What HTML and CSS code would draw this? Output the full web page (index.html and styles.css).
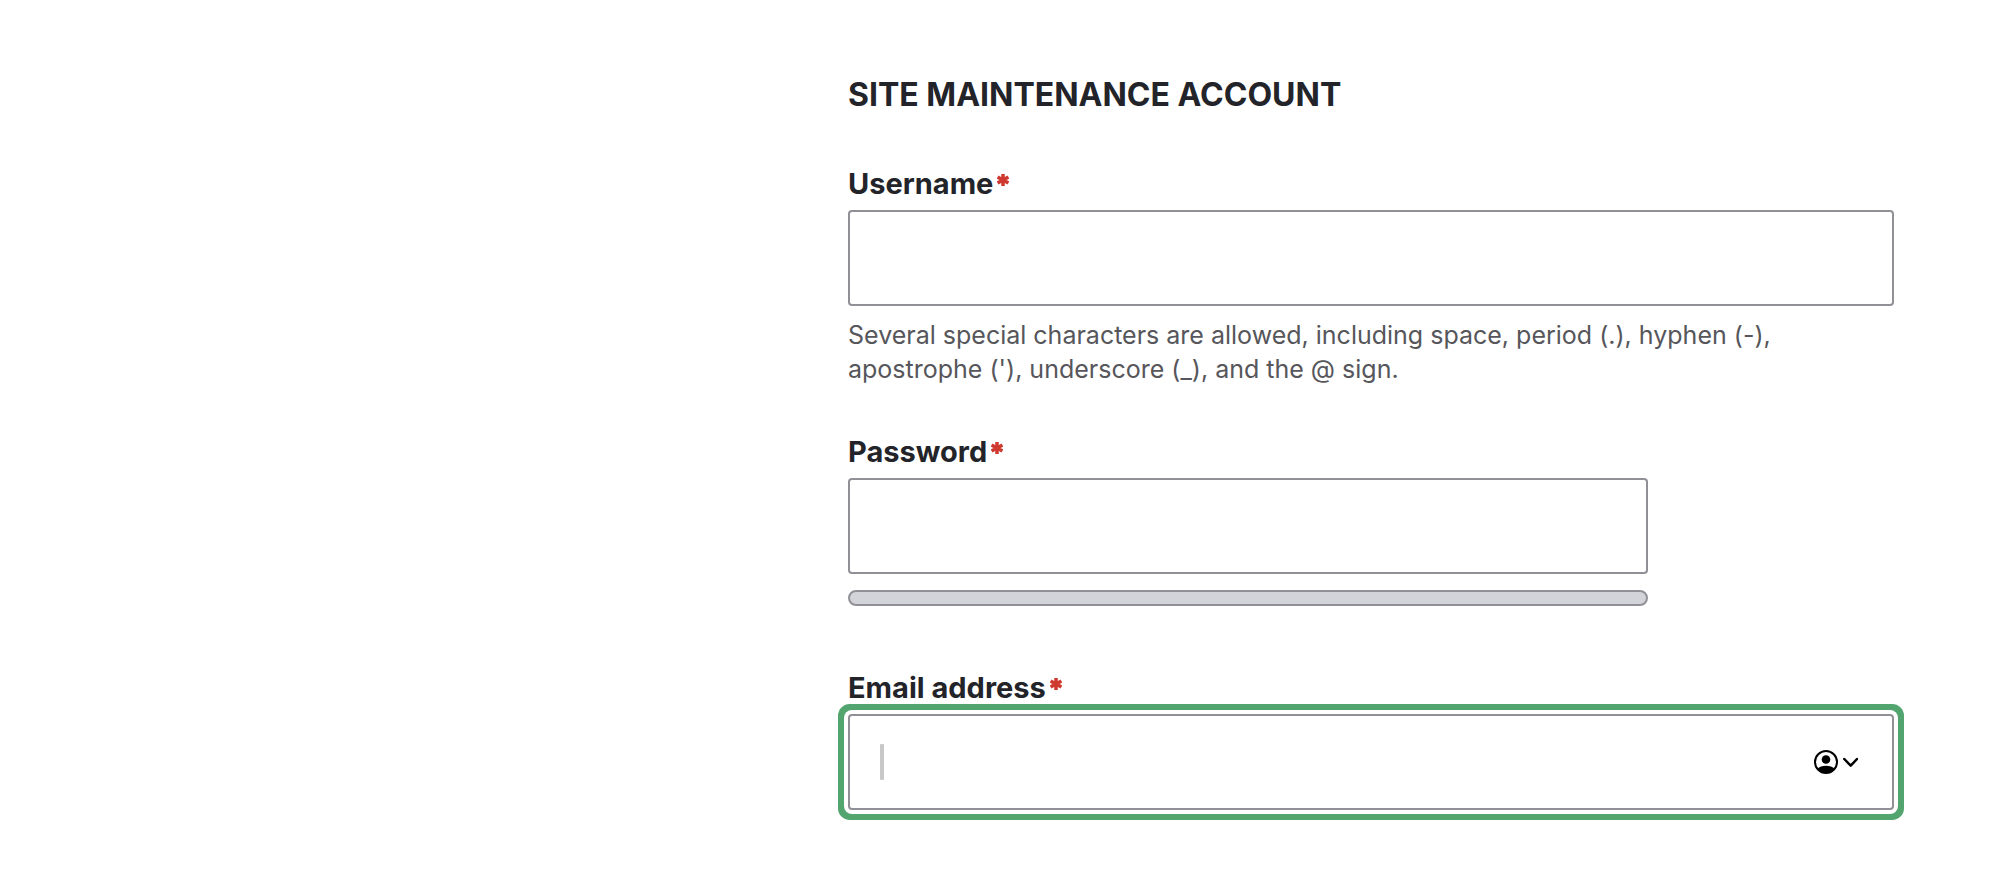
FILE: index.html
```html
<!DOCTYPE html>
<html lang="en">
<head>
<meta charset="utf-8">
<meta name="viewport" content="width=device-width, initial-scale=1">
<title>Site maintenance account</title>
<link rel="stylesheet" href="styles.css">
</head>
<body>
<main class="page">
  <form class="form">
    <h2 class="form-title">SITE MAINTENANCE ACCOUNT</h2>
    <div class="field">
      <label class="label" for="username">Username<svg class="required" viewBox="0 0 12 12" aria-hidden="true"><path d="M6 0v12M.6 3l10.800 6M.6 9l10.800-6"/></svg></label>
      <input class="input" id="username" type="text" aria-describedby="username-help" required>
      <p class="help" id="username-help">Several special characters are allowed, including space, period (.), hyphen (-), apostrophe ('), underscore (_), and the @ sign.</p>
    </div>
    <div class="field field-password">
      <label class="label" for="password">Password<svg class="required" viewBox="0 0 12 12" aria-hidden="true"><path d="M6 0v12M.6 3l10.800 6M.6 9l10.800-6"/></svg></label>
      <input class="input" id="password" type="password" required>
      <div class="strength"></div>
    </div>
    <div class="field">
      <label class="label" for="email">Email address<svg class="required" viewBox="0 0 12 12" aria-hidden="true"><path d="M6 0v12M.6 3l10.800 6M.6 9l10.800-6"/></svg></label>
      <div class="control">
        <input class="input input-focused" id="email" type="email" required>
        <span class="caret"></span>
        <button class="autofill" type="button" aria-label="Fill from contacts">
          <svg class="autofill-icon" viewBox="0 0 44 24" aria-hidden="true">
            <circle cx="12" cy="12" r="11" fill="none" stroke="#000" stroke-width="2"/>
            <circle cx="12" cy="9.500" r="4.300"/>
            <path d="M3.500 19C5 16.800 8.500 15.800 12 15.800s7 1 8.500 3.200A11 11 0 0 1 3.500 19z"/>
            <path d="M30.300 9l6.400 6.700L43 9" fill="none" stroke="#000" stroke-width="2.500" stroke-linecap="round" stroke-linejoin="round"/>
          </svg>
        </button>
      </div>
    </div>
  </form>
</main>
</body>
</html>
```
FILE: styles.css
```css
* { box-sizing: border-box; }

body {
  margin: 0;
  background: #fff;
  color: #232429;
  font-family: Inter, "Liberation Sans", sans-serif;
}

.page { padding: 74px 96px 64px 848px; }

.form {
  display: flex;
  flex-direction: column;
  gap: 48px;
}

.form-title {
  margin: 0 0 2px;
  font-size: 32px;
  line-height: 42px;
  font-weight: 700;
}

.field {
  display: flex;
  flex-direction: column;
}

.field-password {
  max-width: 800px;
  margin-bottom: 16px;
}

.label {
  display: flex;
  align-items: flex-start;
  gap: 4px;
  margin-bottom: 8px;
  font-size: 29px;
  line-height: 36px;
  font-weight: 700;
}

.required {
  width: 12px;
  height: 12px;
  margin-top: 8px;
  fill: none;
  stroke: #cf3a30;
  stroke-width: 3.5;
}

.input {
  width: 100%;
  height: 96px;
  padding: 0 30px;
  border: 2px solid #919097;
  border-radius: 4px;
  background: #fff;
  color: inherit;
  font: inherit;
  font-size: 32px;
  outline: none;
}

.input-focused {
  display: block;
  padding-right: 96px;
  box-shadow: 0 0 0 4px #fff, 0 0 0 10px #53a570;
}

.help {
  margin: 12px 0 0;
  color: #56565b;
  font-size: 25px;
  line-height: 34px;
}

.strength {
  height: 16px;
  margin-top: 16px;
  border: 2px solid #919097;
  border-radius: 8px;
  background: #d3d4d9;
}

.control { position: relative; }

.caret {
  position: absolute;
  top: 30px;
  left: 32px;
  width: 4px;
  height: 36px;
  border-radius: 1px;
  background: #c8c8c8;
}

.autofill {
  position: absolute;
  top: 36px;
  right: 36px;
  padding: 0;
  border: 0;
  background: none;
}

.autofill-icon {
  display: block;
  width: 44px;
  height: 24px;
}
```
